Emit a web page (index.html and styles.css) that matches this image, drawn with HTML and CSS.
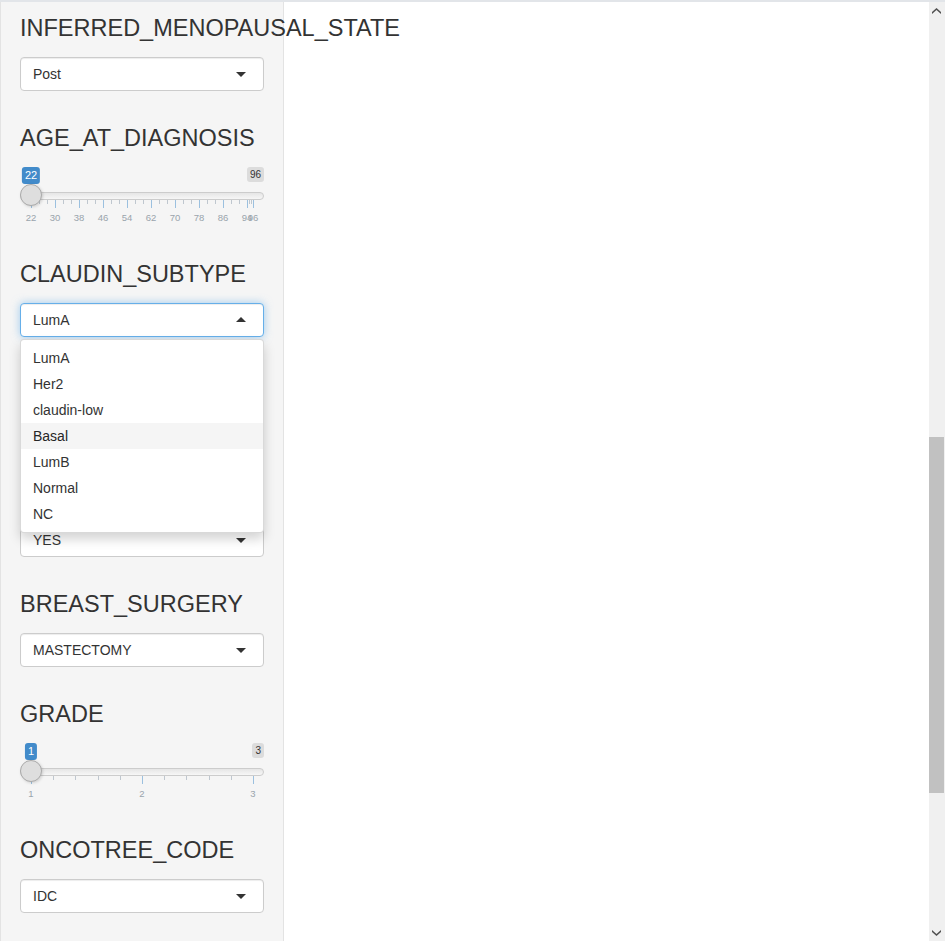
FILE: index.html
```
<!DOCTYPE html>
<html>
<head>
<meta charset="utf-8">
<title>Filters</title>
<link rel="stylesheet" href="styles.css">
</head>
<body>
<div class="frame">
  <aside class="sidebar">
    <div class="group">
      <h3 class="label">INFERRED_MENOPAUSAL_STATE</h3>
      <div class="select"><div class="select-input">Post</div></div>
    </div>

    <div class="group">
      <h3 class="label">AGE_AT_DIAGNOSIS</h3>
      <div class="irs">
        <span class="irs-line"></span>
        <span class="irs-max">96</span>
        <span class="irs-single">22</span>
        <div class="irs-grid">
          <span class="pol" style="left:0%"></span>
          <span class="pol small" style="left:3.604%"></span>
          <span class="pol small" style="left:7.207%"></span>
          <span class="pol" style="left:10.811%"></span>
          <span class="pol small" style="left:14.414%"></span>
          <span class="pol small" style="left:18.018%"></span>
          <span class="pol" style="left:21.622%"></span>
          <span class="pol small" style="left:25.225%"></span>
          <span class="pol small" style="left:28.829%"></span>
          <span class="pol" style="left:32.432%"></span>
          <span class="pol small" style="left:36.036%"></span>
          <span class="pol small" style="left:39.640%"></span>
          <span class="pol" style="left:43.243%"></span>
          <span class="pol small" style="left:46.847%"></span>
          <span class="pol small" style="left:50.450%"></span>
          <span class="pol" style="left:54.054%"></span>
          <span class="pol small" style="left:57.658%"></span>
          <span class="pol small" style="left:61.261%"></span>
          <span class="pol" style="left:64.865%"></span>
          <span class="pol small" style="left:68.468%"></span>
          <span class="pol small" style="left:72.072%"></span>
          <span class="pol" style="left:75.676%"></span>
          <span class="pol small" style="left:79.279%"></span>
          <span class="pol small" style="left:82.883%"></span>
          <span class="pol" style="left:86.486%"></span>
          <span class="pol small" style="left:90.090%"></span>
          <span class="pol small" style="left:93.694%"></span>
          <span class="pol" style="left:97.297%"></span>
          <span class="pol small" style="left:98.198%"></span>
          <span class="pol small" style="left:99.099%"></span>
          <span class="pol" style="left:100%"></span>
          <span class="txt" style="left:0%">22</span>
          <span class="txt" style="left:10.811%">30</span>
          <span class="txt" style="left:21.622%">38</span>
          <span class="txt" style="left:32.432%">46</span>
          <span class="txt" style="left:43.243%">54</span>
          <span class="txt" style="left:54.054%">62</span>
          <span class="txt" style="left:64.865%">70</span>
          <span class="txt" style="left:75.676%">78</span>
          <span class="txt" style="left:86.486%">86</span>
          <span class="txt" style="left:97.297%">94</span>
          <span class="txt" style="left:100%">96</span>
        </div>
        <span class="irs-handle"></span>
      </div>
    </div>

    <div class="group">
      <h3 class="label">CLAUDIN_SUBTYPE</h3>
      <div class="select open">
        <div class="select-input focus">LumA</div>
        <div class="dropdown">
          <div class="option">LumA</div>
          <div class="option">Her2</div>
          <div class="option">claudin-low</div>
          <div class="option active">Basal</div>
          <div class="option">LumB</div>
          <div class="option">Normal</div>
          <div class="option">NC</div>
        </div>
      </div>
    </div>

    <div class="group covered">
      <h3 class="label">CELLULARITY</h3>
      <div class="select"><div class="select-input">High</div></div>
    </div>

    <div class="group">
      <h3 class="label covered">CHEMOTHERAPY</h3>
      <div class="select"><div class="select-input">YES</div></div>
    </div>

    <div class="group">
      <h3 class="label">BREAST_SURGERY</h3>
      <div class="select"><div class="select-input">MASTECTOMY</div></div>
    </div>

    <div class="group">
      <h3 class="label">GRADE</h3>
      <div class="irs">
        <span class="irs-line"></span>
        <span class="irs-max">3</span>
        <span class="irs-single">1</span>
        <div class="irs-grid">
          <span class="pol" style="left:0%"></span>
          <span class="pol small" style="left:10%"></span>
          <span class="pol small" style="left:20%"></span>
          <span class="pol small" style="left:30%"></span>
          <span class="pol small" style="left:40%"></span>
          <span class="pol" style="left:50%"></span>
          <span class="pol small" style="left:60%"></span>
          <span class="pol small" style="left:70%"></span>
          <span class="pol small" style="left:80%"></span>
          <span class="pol small" style="left:90%"></span>
          <span class="pol" style="left:100%"></span>
          <span class="txt" style="left:0%">1</span>
          <span class="txt" style="left:50%">2</span>
          <span class="txt" style="left:100%">3</span>
        </div>
        <span class="irs-handle"></span>
      </div>
    </div>

    <div class="group">
      <h3 class="label">ONCOTREE_CODE</h3>
      <div class="select"><div class="select-input">IDC</div></div>
    </div>
  </aside>

  <main class="main"></main>

  <div class="scrollbar">
    <div class="sb-btn">
      <svg width="9" height="6" viewBox="0 0 9 6"><polygon points="0,4 4.5,0 9,4 9,6 4.5,2 0,6" fill="#505050"/></svg>
    </div>
    <div class="sb-track"><div class="sb-thumb"></div></div>
    <div class="sb-btn">
      <svg width="9" height="6" viewBox="0 0 9 6"><polygon points="0,0 4.5,4 9,0 9,2 4.5,6 0,2" fill="#505050"/></svg>
    </div>
  </div>
</div>
</body>
</html>
```

FILE: styles.css
```
* {
  box-sizing: border-box;
}

html, body {
  margin: 0;
  padding: 0;
  background: #fff;
}

body {
  font-family: "Liberation Sans", Arial, Helvetica, sans-serif;
  font-size: 14px;
  color: #333;
  overflow: hidden;
}

.frame {
  display: flex;
  height: 941px;
  border-top: 2px solid #e2e5e9;
  overflow: hidden;
}

.sidebar {
  width: 284px;
  flex: none;
  background: #f5f5f5;
  border-left: 1px solid #e3e3e3;
  border-right: 1px solid #e3e3e3;
  padding: 13px 19px 0 19px;
  display: flex;
  flex-direction: column;
  gap: 34px;
  position: relative;
  z-index: 1;
}

.group {
  display: flex;
  flex-direction: column;
  gap: 16px;
}

.covered {
  visibility: hidden;
}

.label {
  margin: 0;
  font-size: 23.5px;
  line-height: 26px;
  font-weight: 500;
  color: #333;
  white-space: nowrap;
}

.select {
  position: relative;
}

.select-input {
  position: relative;
  height: 34px;
  padding: 6px 12px;
  line-height: 20px;
  font-size: 14px;
  color: #333;
  background: #fff;
  border: 1px solid #ccc;
  border-radius: 4px;
  box-shadow: inset 0 1px 1px rgba(0, 0, 0, 0.075);
}

.select-input::after {
  content: "";
  position: absolute;
  right: 17px;
  top: 50%;
  margin-top: -2.5px;
  width: 0;
  height: 0;
  border-style: solid;
  border-width: 5px 5px 0 5px;
  border-color: #333 transparent transparent transparent;
}

.select-input.focus {
  border-color: #66afe9;
  box-shadow: inset 0 1px 1px rgba(0, 0, 0, 0.075), 0 0 8px rgba(102, 175, 233, 0.6);
}

.select-input.focus::after {
  margin-top: -3px;
  border-width: 0 5px 5px 5px;
  border-color: transparent transparent #333 transparent;
}

.dropdown {
  position: absolute;
  top: 100%;
  left: 0;
  right: 0;
  margin-top: 2px;
  z-index: 10;
  background: #fff;
  border: 1px solid rgba(0, 0, 0, 0.15);
  border-radius: 4px;
  box-shadow: 0 6px 12px rgba(0, 0, 0, 0.175);
  padding: 5px 0;
}

.option {
  padding: 3px 12px;
  line-height: 20px;
  font-size: 14px;
  color: #333;
}

.option.active {
  background: #f5f5f5;
  color: #262626;
}

/* range slider */
.irs {
  position: relative;
  height: 60px;
}

.irs-line {
  position: absolute;
  left: 0;
  right: 0;
  top: 25px;
  height: 8px;
  border: 1px solid #ccc;
  border-radius: 16px;
  background: linear-gradient(to bottom, #ddd -50%, #fff 150%);
}

.irs-single,
.irs-max {
  position: absolute;
  top: 0;
  padding: 1px 3px;
  border-radius: 3px;
  line-height: 1.333;
  white-space: nowrap;
}

.irs-single {
  left: 11px;
  transform: translateX(-50%);
  background: #428bca;
  color: #fff;
  font-size: 11px;
  z-index: 2;
}

.irs-max {
  right: 0;
  background: rgba(0, 0, 0, 0.1);
  color: #333;
  font-size: 10px;
}

.irs-grid {
  position: absolute;
  left: 11px;
  right: 11px;
  bottom: 0;
  height: 27px;
}

.pol {
  position: absolute;
  top: 0;
  width: 1px;
  height: 8px;
  background: #428bca;
  opacity: 0.5;
}

.pol.small {
  height: 4px;
  background: #8a9aaa;
}

.txt {
  position: absolute;
  bottom: 5px;
  transform: translateX(-50%);
  font-size: 9.5px;
  line-height: 9px;
  color: #99a4ac;
  white-space: nowrap;
}

.irs-handle {
  position: absolute;
  top: 17px;
  left: 0;
  width: 22px;
  height: 22px;
  border: 1px solid #aaa;
  border-radius: 27px;
  background: #dedede;
  box-shadow: 1px 1px 3px rgba(0, 0, 0, 0.15);
  z-index: 3;
}

.main {
  flex: 1;
  background: transparent;
}

.scrollbar {
  width: 16px;
  flex: none;
  background: #f0f0f0;
  display: flex;
  flex-direction: column;
}

.sb-btn {
  height: 17px;
  display: flex;
  align-items: center;
  justify-content: center;
  padding-right: 1px;
}

.sb-track {
  flex: 1;
}

.sb-thumb {
  margin-top: 418px;
  margin-right: 1px;
  height: 356px;
  background: #c1c1c1;
}
```
